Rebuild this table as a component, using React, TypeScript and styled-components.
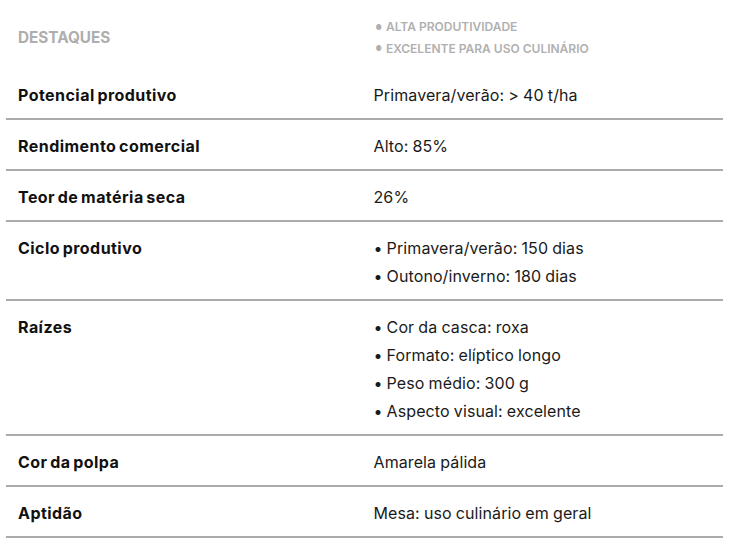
import React from 'react';
import styled, { createGlobalStyle } from 'styled-components';

interface Spec {
  label: string;
  value: string | string[];
}

const specs: Spec[] = [
  { label: 'Potencial produtivo', value: 'Primavera/verão: > 40 t/ha' },
  { label: 'Rendimento comercial', value: 'Alto: 85%' },
  { label: 'Teor de matéria seca', value: '26%' },
  { label: 'Ciclo produtivo', value: ['Primavera/verão: 150 dias', 'Outono/inverno: 180 dias'] },
  {
    label: 'Raízes',
    value: ['Cor da casca: roxa', 'Formato: elíptico longo', 'Peso médio: 300 g', 'Aspecto visual: excelente'],
  },
  { label: 'Cor da polpa', value: 'Amarela pálida' },
  { label: 'Aptidão', value: 'Mesa: uso culinário em geral' },
];

const highlights = ['ALTA PRODUTIVIDADE', 'EXCELENTE PARA USO CULINÁRIO'];

const GlobalStyle = createGlobalStyle`
  body {
    margin: 0;
    background: #fff;
    font-family: Inter, 'Noto Sans', sans-serif;
    color: #111;
  }
`;

const Table = styled.div`
  margin: 0 11px 0 6px;
  display: flex;
  flex-direction: column;
`;

const Row = styled.div<{ $header?: boolean }>`
  display: grid;
  grid-template-columns: 1fr 1fr;
  align-items: ${(p) => (p.$header ? 'center' : 'start')};
  padding: ${(p) => (p.$header ? '16px 0 10px' : '12px 0 9px')};
  border-bottom: ${(p) => (p.$header ? 'none' : '2px solid #ababab')};
`;

const Label = styled.div`
  padding-left: 12px;
  font-size: 16px;
  font-weight: 700;
  letter-spacing: 0.45px;
  word-spacing: -1.5px;
  line-height: 28px;
  color: #111;
`;

const HeaderLabel = styled.div`
  padding-left: 12px;
  font-size: 15.3px;
  font-weight: 700;
  letter-spacing: 0;
  color: #aeaeae;
`;

const Value = styled.div`
  padding-left: 9px;
  font-size: 16px;
  font-weight: 400;
  letter-spacing: 0.1px;
  word-spacing: -0.5px;
  line-height: 28px;
  color: #1a1a1a;
`;

const List = styled.ul`
  list-style: none;
  margin: 0;
  padding: 0 0 0 9px;
`;

const Item = styled.li`
  font-size: 16px;
  letter-spacing: 0.1px;
  word-spacing: -0.5px;
  line-height: 28px;
  color: #1a1a1a;

  &::before {
    content: '•';
    margin-right: 4px;
  }
`;

const HighlightList = styled.ul`
  list-style: none;
  margin: 0;
  padding: 0 0 0 11px;
`;

const Highlight = styled.li`
  font-size: 12px;
  font-weight: 600;
  letter-spacing: 0;
  line-height: 21px;
  color: #b0b0b0;

  &::before {
    content: '●';
    font-size: 7px;
    vertical-align: 1.5px;
    margin-right: 4px;
  }
`;

export default function App() {
  return (
    <>
      <GlobalStyle />
      <Table>
        <Row $header>
          <HeaderLabel>DESTAQUES</HeaderLabel>
          <HighlightList>
            {highlights.map((h) => (
              <Highlight key={h}>{h}</Highlight>
            ))}
          </HighlightList>
        </Row>
        {specs.map((s) => (
          <Row key={s.label}>
            <Label>{s.label}</Label>
            {Array.isArray(s.value) ? (
              <List>
                {s.value.map((v) => (
                  <Item key={v}>{v}</Item>
                ))}
              </List>
            ) : (
              <Value>{s.value}</Value>
            )}
          </Row>
        ))}
      </Table>
    </>
  );
}
